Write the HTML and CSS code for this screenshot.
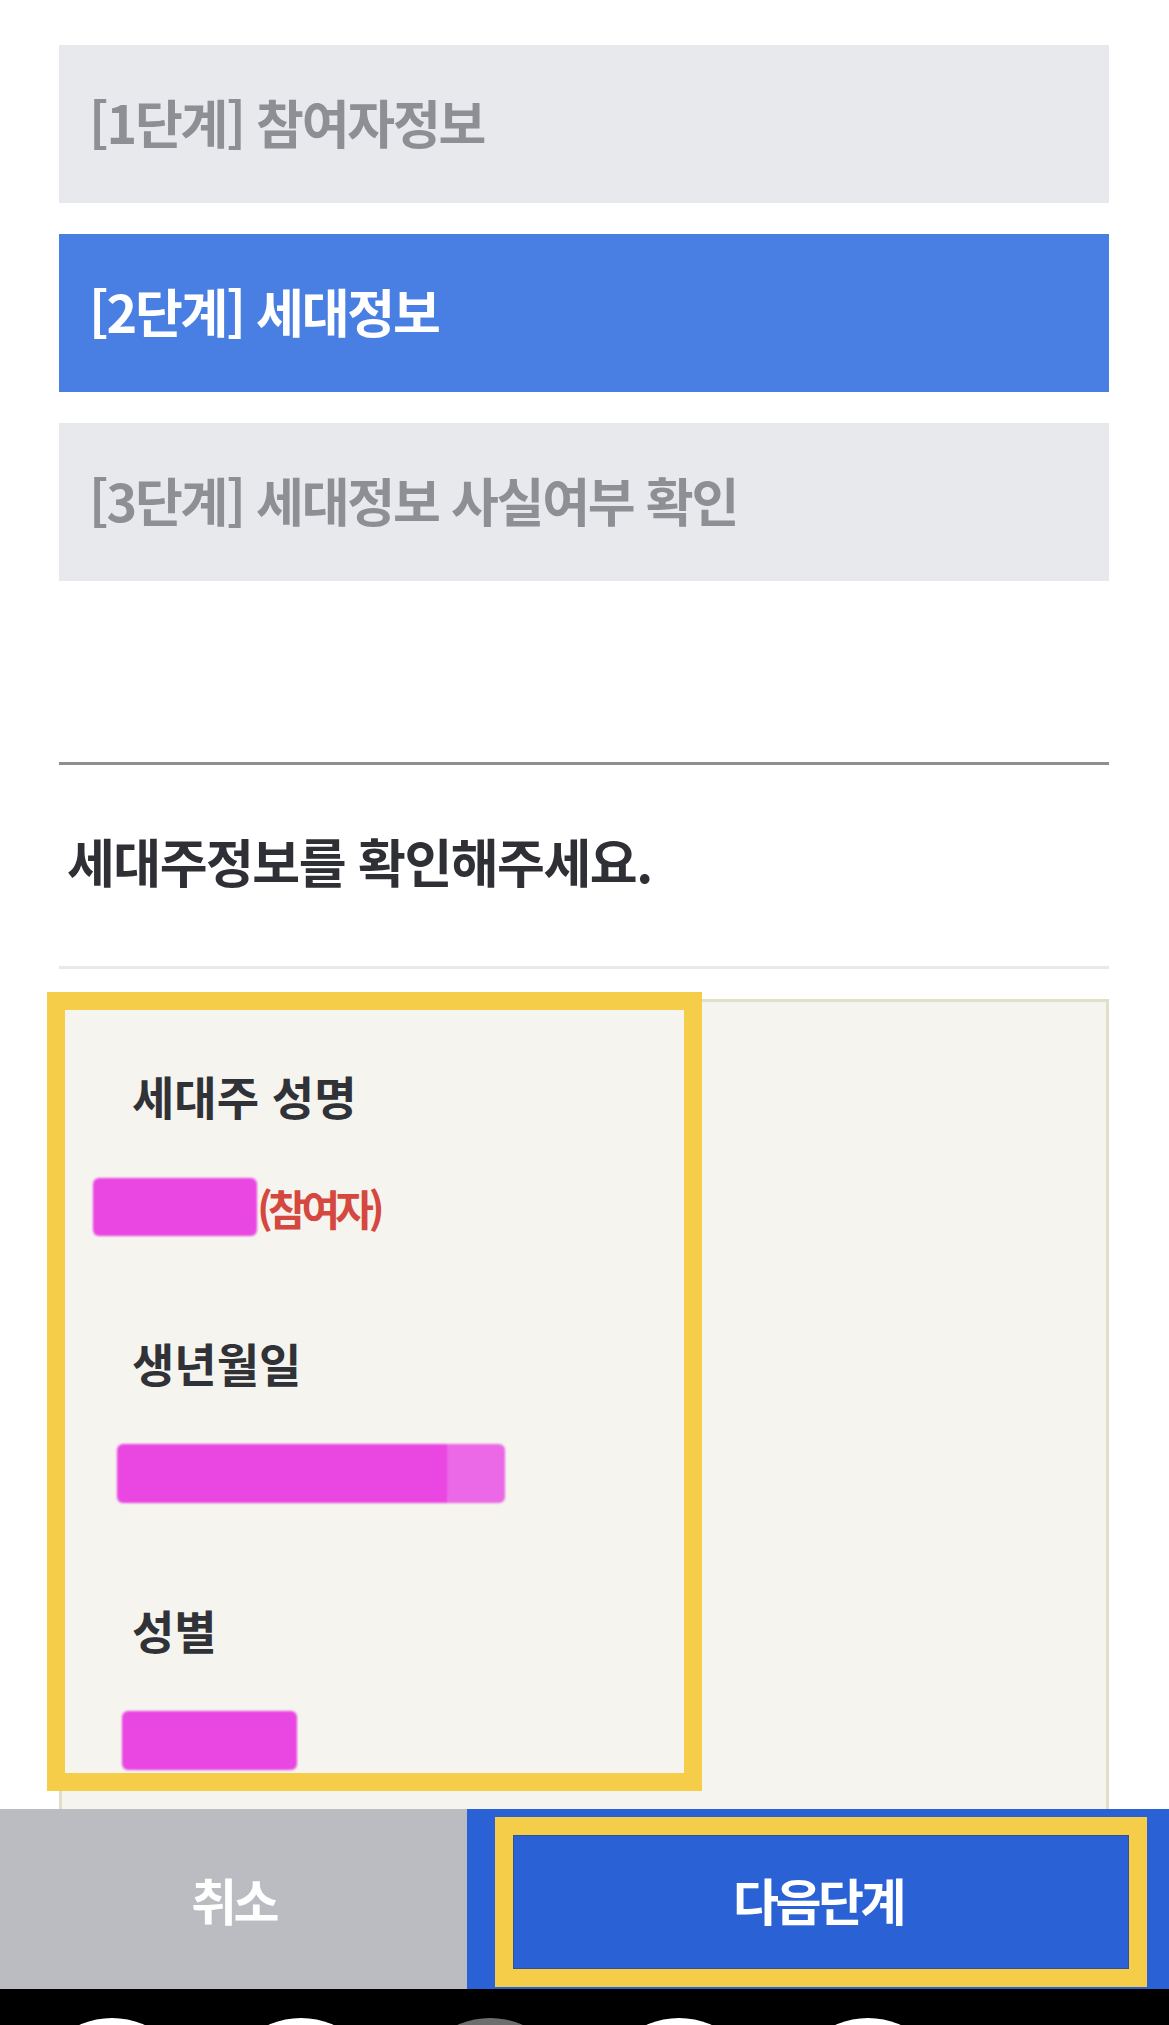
FILE: index.html
```html
<!DOCTYPE html>
<html lang="ko">
<head>
<meta charset="utf-8">
<title>세대정보</title>
<link rel="stylesheet" href="styles.css">
</head>
<body>
<div class="page">
  <ol class="steps">
    <li class="step">[1단계] 참여자정보</li>
    <li class="step step-active">[2단계] 세대정보</li>
    <li class="step">[3단계] 세대정보 사실여부 확인</li>
  </ol>
  <hr class="divider">
  <h2 class="title">세대주정보를 확인해주세요.</h2>
  <hr class="subline">
  <div class="card">
    <dl class="info">
      <dt class="label label-first">세대주 성명</dt>
      <dd class="value"><span class="redact redact-name"></span><span class="tag">(참여자)</span></dd>
      <dt class="label">생년월일</dt>
      <dd class="value"><span class="redact redact-birth"></span></dd>
      <dt class="label">성별</dt>
      <dd class="value"><span class="redact redact-sex"></span></dd>
    </dl>
    <div class="mark mark-card"></div>
  </div>
</div>
<div class="actionbar">
  <button class="btn btn-cancel" type="button">취소</button>
  <button class="btn btn-next" type="button">다음단계<span class="mark mark-btn"></span></button>
</div>
<div class="navbar">
  <span class="dot"></span>
  <span class="dot"></span>
  <span class="dot dot-dim"></span>
  <span class="dot"></span>
  <span class="dot"></span>
</div>
</body>
</html>
```
FILE: styles.css
```css
* { box-sizing: border-box; }
html, body {
  margin: 0;
  padding: 0;
  background: #ffffff;
  font-family: "Noto Sans CJK KR", "Noto Sans", sans-serif;
}
.page {
  padding: 45px 60px 0 59px;
}
.steps {
  list-style: none;
  margin: 0;
  padding: 0;
  display: flex;
  flex-direction: column;
  gap: 31px;
}
.step {
  height: 158px;
  display: flex;
  align-items: center;
  padding: 0 0 5px 30px;
  background: #e8e9ec;
  color: #8d8f94;
  font-size: 52px;
  font-weight: 700;
  letter-spacing: -2.2px;
  white-space: nowrap;
}
.step-active {
  background: #497fe3;
  color: #ffffff;
}
.divider {
  border: 0;
  margin: 181px 0 0;
  height: 3px;
  background: #8e8e91;
}
.title {
  margin: 66px 0 0;
  padding-left: 8px;
  font-size: 52px;
  line-height: 60px;
  font-weight: 700;
  letter-spacing: -1.5px;
  color: #2f3035;
}
.subline {
  border: 0;
  margin: 75px 0 0;
  height: 3px;
  background: #e9e9e9;
}
.card {
  position: relative;
  margin-top: 30px;
  border: 3px solid #e1dfc9;
  background: #f5f4ee;
  padding: 65px 0 150px;
}
.info { margin: 0; }
.label {
  margin: 98px 0 0;
  padding-left: 70px;
  font-size: 46px;
  line-height: 56px;
  font-weight: 700;
  letter-spacing: 0;
  color: #303237;
}
.label-first { margin-top: 0; }
.value {
  margin: 54px 0 0;
  display: flex;
  align-items: center;
  height: 59px;
}
.redact {
  display: block;
  height: 59px;
  border-radius: 6px;
  background: #e946e2;
  filter: blur(1.2px);
}
.redact-name { width: 164px; margin-left: 31px; height: 58px; }
.redact-birth {
  width: 388px;
  margin-left: 55px;
  background: linear-gradient(90deg, #e946e2 0, #e946e2 85%, #eb68e6 85%, #eb68e6 100%);
}
.redact-sex { width: 175px; margin-left: 60px; }
.tag {
  font-size: 42px;
  font-weight: 700;
  letter-spacing: -5px;
  color: #d5483f;
  line-height: 58px;
  padding-top: 2px;
}
.mark {
  position: absolute;
  border: 18px solid #f6cd48;
  pointer-events: none;
}
.mark-card {
  left: -15px;
  top: -10px;
  width: 655px;
  height: 799px;
}
.actionbar {
  position: fixed;
  left: 0;
  right: 0;
  bottom: 36px;
  height: 180px;
  display: grid;
  grid-template-columns: 467px 1fr;
}
.btn {
  position: relative;
  border: 0;
  margin: 0;
  padding: 0;
  font-family: "Noto Sans CJK KR", "Noto Sans", sans-serif;
  font-size: 50px;
  font-weight: 700;
  letter-spacing: -3.5px;
  color: #ffffff;
}
.btn-cancel { background: #babcc1; }
.btn-next { background: #2a61d4; }
.mark-btn {
  left: 28px;
  top: 8px;
  width: 652px;
  height: 170px;
  box-shadow: inset 0 0 0 1px rgba(60, 70, 110, 0.6);
}
.navbar {
  position: fixed;
  left: 0;
  right: 0;
  bottom: 0;
  height: 36px;
  background: #000000;
  overflow: hidden;
  display: flex;
  gap: 29px;
  padding: 29px 0 0 32px;
}
.dot {
  flex: none;
  width: 160px;
  height: 160px;
  border-radius: 50%;
  background: #ffffff;
}
.dot-dim { background: #6e6e6e; }
```
